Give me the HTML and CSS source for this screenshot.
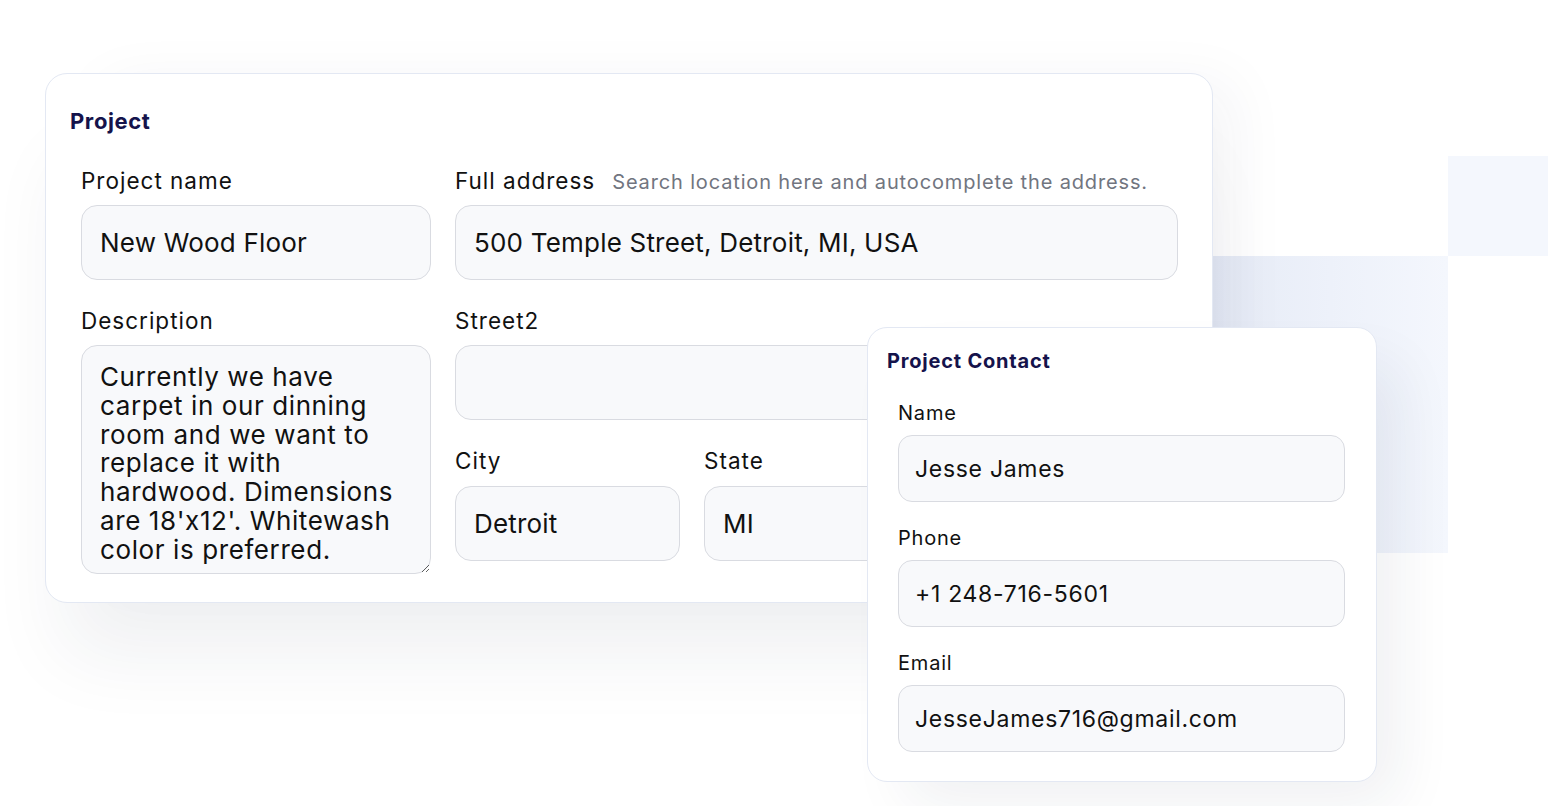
FILE: index.html
```html
<!DOCTYPE html>
<html lang="en">
<head>
<meta charset="utf-8">
<title>Project form</title>
<link rel="stylesheet" href="styles.css">
</head>
<body>
<div class="stage">
  <div class="deco deco-square"></div>
  <div class="deco deco-panel"></div>

  <section class="card main-card">
    <h2 class="card-title">Project</h2>
    <div class="form-grid">
      <div class="col">
        <div class="field">
          <label class="label">Project name</label>
          <input class="input" type="text" value="New Wood Floor">
        </div>
        <div class="field">
          <label class="label">Description</label>
          <textarea class="input textarea" wrap="off">Currently we have
carpet in our dinning
room and we want to
replace it with
hardwood. Dimensions
are 18'x12'. Whitewash
color is preferred.</textarea>
        </div>
      </div>
      <div class="col">
        <div class="field">
          <label class="label">Full address<span class="hint">Search location here and autocomplete the address.</span></label>
          <input class="input" type="text" value="500 Temple Street, Detroit, MI, USA">
        </div>
        <div class="field">
          <label class="label">Street2</label>
          <input class="input" type="text" value="">
        </div>
        <div class="row3">
          <div class="field">
            <label class="label">City</label>
            <input class="input" type="text" value="Detroit">
          </div>
          <div class="field">
            <label class="label">State</label>
            <input class="input" type="text" value="MI">
          </div>
          <div class="field">
            <label class="label">Zip</label>
            <input class="input" type="text" value="48201">
          </div>
        </div>
      </div>
    </div>
  </section>

  <section class="card contact-card">
    <h3 class="card-title small">Project Contact</h3>
    <div class="contact-fields">
      <div class="field">
        <label class="label sm">Name</label>
        <input class="input sm" type="text" value="Jesse James">
      </div>
      <div class="field">
        <label class="label sm">Phone</label>
        <input class="input sm" type="text" value="+1 248-716-5601">
      </div>
      <div class="field">
        <label class="label sm">Email</label>
        <input class="input sm" type="text" value="JesseJames716@gmail.com">
      </div>
    </div>
  </section>
</div>
</body>
</html>
```

FILE: styles.css
```css
* { box-sizing: border-box; }

html, body {
  margin: 0;
  padding: 0;
  background: #ffffff;
}

body {
  font-family: Inter, "Noto Sans", "Liberation Sans", sans-serif;
  color: #111111;
}

.stage {
  position: relative;
  width: 1566px;
  height: 806px;
  overflow: hidden;
  padding: 73px 0 0 45px;
}

.deco {
  position: absolute;
  z-index: 0;
}

.deco-square {
  left: 1448px;
  top: 156px;
  width: 100px;
  height: 100px;
  background: #f4f7fd;
}

.deco-panel {
  left: 1213px;
  top: 256px;
  width: 235px;
  height: 297px;
  background: linear-gradient(90deg, #e6ebf6 0%, #edf1fa 50%, #f4f7fd 100%);
}

.card {
  position: relative;
  z-index: 1;
  background: #ffffff;
  border: 1px solid #e3e8f3;
}

.main-card {
  width: 1168px;
  height: 530px;
  border-radius: 22px;
  padding: 32px 34px 0 24px;
  box-shadow: 0 70px 80px -20px rgba(30, 40, 70, 0.07), 40px -10px 60px -20px rgba(30, 40, 70, 0.05);
}

.card-title {
  margin: 0;
  font-size: 22px;
  line-height: 30px;
  font-weight: 700;
  letter-spacing: 0.6px;
  color: #15134b;
}

.card-title.small {
  font-size: 20px;
  line-height: 26px;
  letter-spacing: 0.8px;
}

.form-grid {
  display: grid;
  grid-template-columns: 350px 723px;
  column-gap: 24px;
  padding: 31px 0 0 11px;
}

.col {
  display: flex;
  flex-direction: column;
  gap: 27px;
}

.field {
  display: flex;
  flex-direction: column;
}

.label {
  display: block;
  height: 28px;
  font-size: 22.5px;
  line-height: 28px;
  letter-spacing: 1px;
  margin-bottom: 10px;
  color: #111111;
  white-space: nowrap;
}

.hint {
  margin-left: 17px;
  font-size: 20px;
  line-height: 1;
  letter-spacing: 0.85px;
  color: #71757f;
}

.input {
  display: block;
  width: 100%;
  height: 75px;
  margin: 0;
  padding: 0 18px;
  font-family: inherit;
  font-size: 26px;
  letter-spacing: 0.2px;
  color: #111111;
  background: #f8f9fb;
  border: 1px solid #d9dbe1;
  border-radius: 16px;
  outline: none;
}

.textarea {
  height: 229px;
  padding: 17px 18px 0 18px;
  line-height: 28.8px;
  letter-spacing: 0.6px;
  overflow: hidden;
  resize: vertical;
  white-space: pre;
}

.row3 {
  display: grid;
  grid-template-columns: repeat(3, 225px);
  column-gap: 24px;
}

.row3 .label {
  margin-bottom: 11px;
}

.contact-card {
  position: absolute;
  left: 867px;
  top: 327px;
  width: 510px;
  height: 455px;
  border-radius: 20px;
  padding: 20px 31px 0 19px;
  box-shadow: 30px 30px 60px -10px rgba(30, 40, 70, 0.07);
  z-index: 2;
}

.contact-fields {
  display: flex;
  flex-direction: column;
  gap: 23px;
  padding: 26px 0 0 11px;
}

.label.sm {
  height: 26px;
  font-size: 20px;
  line-height: 26px;
  letter-spacing: 0.8px;
  margin-bottom: 9px;
}

.input.sm {
  height: 67px;
  padding: 0 16px;
  font-size: 23px;
  letter-spacing: 0.7px;
  border-radius: 14px;
}
```
